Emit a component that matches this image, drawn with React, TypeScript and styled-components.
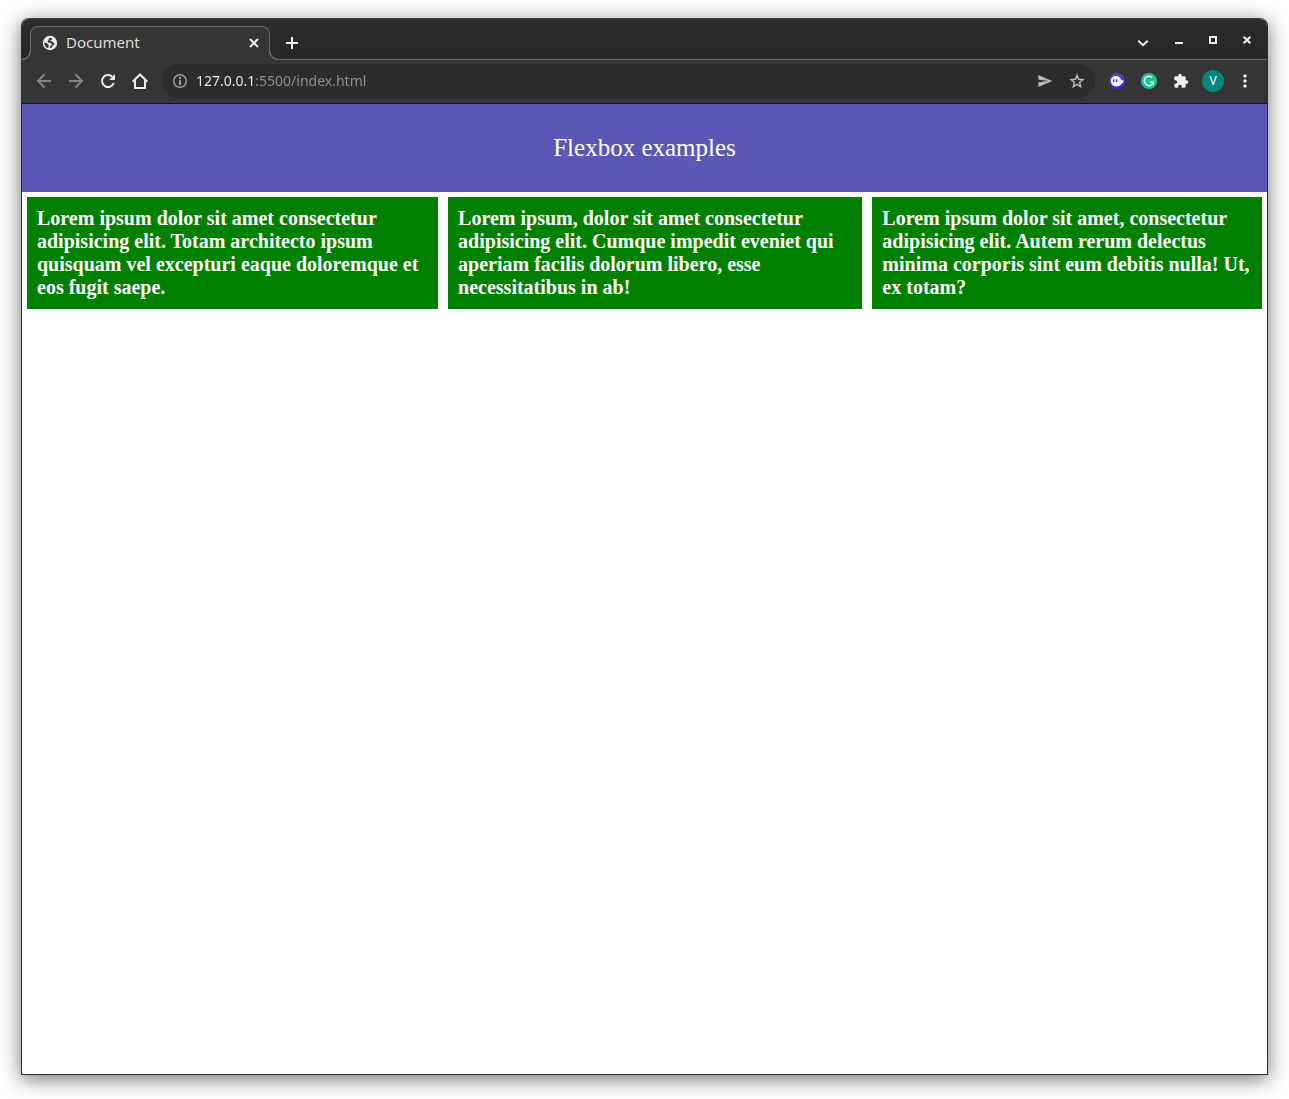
import React from "react";
import styled, { createGlobalStyle } from "styled-components";
import { MdExtension, MdMoreVert, MdSend } from "react-icons/md";

const color = {
  toolbar: "#353535",
  field: "#2c2c2c",
  line: "#6b6b6b",
  icon: "#eeeeec",
  muted: "#868686",
  soft: "#b9b9b9",
};

const uiFont = `"Noto Sans", "Open Sans", sans-serif`;

const GlobalStyle = createGlobalStyle`
  *, *::before, *::after { box-sizing: border-box; }
  body { margin: 0; background: #fff; }
`;

const Desktop = styled.div`
  display: flex;
  min-height: 100vh;
  padding: 18px 21px 24px;
`;

const BrowserWindow = styled.div`
  display: flex;
  flex-direction: column;
  flex: 1;
  min-width: 0;
  overflow: hidden;
  border: 1px solid #2e2e2e;
  border-top-color: #414141;
  border-radius: 8px 8px 0 0;
  background: #fff;
  box-shadow: 0 4px 20px rgba(0, 0, 0, 0.56);
`;

const TabStrip = styled.div`
  display: flex;
  align-items: flex-end;
  height: 41px;
  padding-left: 8px;
  background: linear-gradient(#2c2c2c, #262626);
  box-shadow: inset 0 -1px ${color.line};
  font-family: ${uiFont};
`;

const Tab = styled.div`
  position: relative;
  display: flex;
  align-items: center;
  width: 240px;
  height: 34px;
  padding: 0 7px 1px 11px;
  border: 1px solid ${color.line};
  border-bottom: 0;
  border-radius: 8px 8px 0 0;
  background: ${color.toolbar};
  color: #dededc;
  font-size: 15px;
  line-height: 22px;

  &::before,
  &::after {
    content: "";
    position: absolute;
    bottom: 0;
    width: 9px;
    height: 9px;
  }
  &::before {
    left: -9px;
    background: radial-gradient(circle at 0 0, #272727 7px, ${color.line} 8px, ${color.line} 9px, ${color.toolbar} 9px);
  }
  &::after {
    right: -9px;
    background: radial-gradient(circle at 100% 0, #272727 7px, ${color.line} 8px, ${color.line} 9px, ${color.toolbar} 9px);
  }
`;

const TabTitle = styled.span`
  flex: 1;
  margin-left: 8px;
  padding-bottom: 2px;
`;

const IconButton = styled.button<{ $width?: number; $tone?: string }>`
  display: flex;
  align-items: center;
  justify-content: center;
  flex: none;
  width: ${(p) => p.$width ?? 32}px;
  height: 32px;
  padding: 0;
  border: 0;
  background: none;
  color: ${(p) => p.$tone ?? color.icon};
`;

const NewTabSlot = styled.div`
  flex: 1;
  padding: 0 0 1px 6px;
`;

const WindowControls = styled.div`
  display: flex;
  align-self: flex-start;
  padding: 5px 3px 0 0;
`;

const Toolbar = styled.div`
  display: flex;
  align-items: center;
  height: 44px;
  padding: 0 6px 1px;
  border-bottom: 1px solid #151515;
  background: ${color.toolbar};
`;

const AddressBar = styled.div`
  display: flex;
  align-items: center;
  flex: 1;
  min-width: 0;
  height: 34px;
  margin: 0 6px;
  padding: 0 2px 0 10px;
  border-radius: 17px;
  background: ${color.field};
  color: #9aa0a6;
`;

/* The host part of the address is bright, the port and path are dimmed. */
const AddressInput = styled.input`
  flex: 1;
  min-width: 0;
  height: 20px;
  margin-left: 8px;
  padding: 0;
  border: 0;
  outline: 0;
  background: linear-gradient(90deg, #f2f2f0 60px, #929292 60px);
  background-clip: text;
  -webkit-background-clip: text;
  -webkit-text-fill-color: transparent;
  color: #f2f2f0;
  font-family: ${uiFont};
  font-size: 14px;
  line-height: 20px;
`;

const Avatar = styled.span`
  display: flex;
  align-items: center;
  justify-content: center;
  width: 22px;
  height: 22px;
  border-radius: 50%;
  background: #00897b;
  color: #fff;
  font-family: ${uiFont};
  font-size: 12px;
  line-height: 16px;
`;

const Page = styled.main`
  flex: 1;
  font-family: "Liberation Serif", "Times New Roman", serif;
  color: #fff;
`;

const Banner = styled.header`
  padding: 30px;
  background: #5a58b4;
  font-size: 25px;
  line-height: 28px;
  text-align: center;
`;

const Title = styled.h1`
  margin: 0;
  font: inherit;
`;

const Cards = styled.section`
  display: flex;
`;

const Card = styled.article`
  margin: 5px;
  padding: 10px;
  background: green;
  font-size: 20px;
  font-weight: bold;
  line-height: 23px;
`;

const LineIcon = styled.svg.attrs({ width: 16, height: 16, viewBox: "0 0 16 16" })`
  flex: none;
  fill: none;
  stroke: currentColor;
  stroke-width: 2;
`;

const GlobeIcon = () => (
  <svg width="16" height="16" viewBox="0 0 16 16">
    <circle cx="8" cy="8" r="7.2" fill={color.icon} />
    <path
      d="M8.800 2.700C6.500 3 6.300 4.200 7 5.200c-1.600.2-2 1.400-1 2.300 1.200.9 3.600 0 3.900 1.500.3 1.400-1.600 1.300-1.900 2.800l-.2 1.500c2-.4 2.500-1 2.700-2.300.2-1 1.500-.8 2.600-2.200-1.900-.1-1.300-2.100-3.100-2.400-1-.2-1.900.2-1.500-.8.3-.7 1.900-.5 1.900-1.500z"
      fill={color.toolbar}
    />
    <path d="M2.300 7.500c2 .5 3.900 1 4.300 2.500.3 1.300-.4 1.700-.2 3.300C3.700 12.600 2.100 10.600 2.300 7.500Z" fill={color.toolbar} />
  </svg>
);

const BackIcon = () => (
  <LineIcon>
    <path d="M15 8H2.500M8.500 1.500 2 8l6.500 6.500" />
  </LineIcon>
);

const ForwardIcon = () => (
  <LineIcon>
    <path d="M1 8h12.500M7.500 1.500 14 8l-6.500 6.500" />
  </LineIcon>
);

const ReloadIcon = () => (
  <LineIcon>
    <path d="M13.700 10A6 6 0 1 1 12.300 3.800" />
    <path d="M15 1v6H9z" fill="currentColor" stroke="none" />
  </LineIcon>
);

const HomeIcon = () => (
  <LineIcon>
    <path d="M.7 8.700 8 1.500l7.300 7.200M3 7v8h10V7" />
  </LineIcon>
);

const PlusIcon = () => (
  <LineIcon>
    <path d="M2 8h12M8 2v12" />
  </LineIcon>
);

const TabCloseIcon = () => (
  <LineIcon>
    <path d="m4 4 8 8M12 4l-8 8" />
  </LineIcon>
);

const ChevronIcon = () => (
  <LineIcon>
    <path d="m3.300 8.700 4.700 4.500 4.700-4.500" />
  </LineIcon>
);

const InfoIcon = () => (
  <LineIcon>
    <circle cx="8" cy="8" r="6.300" strokeWidth="1.500" />
    <path d="M8 7.200V12M8 4v2" />
  </LineIcon>
);

const StarIcon = () => (
  <LineIcon>
    <path
      d="m8 2.300 1.600 3.900 4.300.4-3.300 2.800 1 4.200L8 11.400l-3.600 2.200 1-4.200-3.300-2.800 4.300-.4z"
      strokeWidth="1.500"
    />
  </LineIcon>
);

const GhostIcon = () => (
  <svg width="16" height="16" viewBox="0 0 16 16">
    <defs>
      <linearGradient id="ghost" x1="0" y1="0" x2="0" y2="1">
        <stop offset="0" stopColor="#5348b0" />
        <stop offset="1" stopColor="#4a1fe0" />
      </linearGradient>
    </defs>
    <circle cx="8" cy="8" r="8" fill="url(#ghost)" />
    <path
      d="M1.800 7.800C1.800 4.800 4.200 3 7 3c2.700 0 4.300 1.500 5 3.500.4 1.100 1.400.7 2.400.4.600 1.800-.4 3.300-1.700 3.700-.8 2-2.900 2.800-5.400 2.800C4 13.400 1.800 11 1.800 7.800Z"
      fill="#f3effc"
    />
    <path d="M4.700 6.200v2.800M7.500 6.200v2.800" stroke="#4b2fc9" strokeWidth="1.300" />
  </svg>
);

const GrammarIcon = () => (
  <svg width="16" height="16" viewBox="0 0 16 16">
    <circle cx="8" cy="8" r="8" fill="#15c39a" />
    <path
      d="M11.300 4.700A4.600 4.600 0 1 0 12.400 9H9.100M12.400 8.500v3.300"
      fill="none"
      stroke="#e9fff9"
      strokeWidth="1.400"
    />
  </svg>
);

const MinimizeIcon = () => (
  <svg width="8" height="8" viewBox="0 0 8 8">
    <path d="M0 6h8v2H0z" fill="currentColor" />
  </svg>
);

const MaximizeIcon = () => (
  <svg width="8" height="8" viewBox="0 0 8 8">
    <path d="M1 1h6v6H1z" fill="none" stroke="currentColor" strokeWidth="2" />
  </svg>
);

const CloseIcon = () => (
  <svg width="8" height="8" viewBox="0 0 8 8">
    <path d="m.7.7 6.600 6.600M7.300.7.700 7.300" stroke="currentColor" strokeWidth="2" />
  </svg>
);

const paragraphs = [
  "Lorem ipsum dolor sit amet consectetur adipisicing elit. Totam architecto ipsum quisquam vel excepturi eaque doloremque et eos fugit saepe.",
  "Lorem ipsum, dolor sit amet consectetur adipisicing elit. Cumque impedit eveniet qui aperiam facilis dolorum libero, esse necessitatibus in ab!",
  "Lorem ipsum dolor sit amet, consectetur adipisicing elit. Autem rerum delectus minima corporis sint eum debitis nulla! Ut, ex totam?",
];

export default function App() {
  return (
    <>
      <GlobalStyle />
      <Desktop>
        <BrowserWindow>
          <TabStrip>
            <Tab>
              <GlobeIcon />
              <TabTitle>Document</TabTitle>
              <IconButton $width={16} aria-label="Close tab">
                <TabCloseIcon />
              </IconButton>
            </Tab>
            <NewTabSlot>
              <IconButton aria-label="New tab">
                <PlusIcon />
              </IconButton>
            </NewTabSlot>
            <WindowControls>
              <IconButton $width={38} aria-label="Search tabs">
                <ChevronIcon />
              </IconButton>
              <IconButton $width={34} aria-label="Minimize">
                <MinimizeIcon />
              </IconButton>
              <IconButton $width={34} aria-label="Maximize">
                <MaximizeIcon />
              </IconButton>
              <IconButton $width={34} aria-label="Close window">
                <CloseIcon />
              </IconButton>
            </WindowControls>
          </TabStrip>
          <Toolbar>
            <IconButton $tone={color.muted} aria-label="Back">
              <BackIcon />
            </IconButton>
            <IconButton $tone={color.muted} aria-label="Forward">
              <ForwardIcon />
            </IconButton>
            <IconButton aria-label="Reload">
              <ReloadIcon />
            </IconButton>
            <IconButton aria-label="Home">
              <HomeIcon />
            </IconButton>
            <AddressBar>
              <InfoIcon />
              <AddressInput aria-label="Address" defaultValue="127.0.0.1:5500/index.html" />
              <IconButton $tone={color.soft} aria-label="Share">
                <MdSend size={16} />
              </IconButton>
              <IconButton $tone={color.soft} aria-label="Bookmark">
                <StarIcon />
              </IconButton>
            </AddressBar>
            <IconButton aria-label="Ghost extension">
              <GhostIcon />
            </IconButton>
            <IconButton aria-label="Grammar extension">
              <GrammarIcon />
            </IconButton>
            <IconButton aria-label="Extensions">
              <MdExtension size={16} />
            </IconButton>
            <IconButton aria-label="Profile">
              <Avatar>V</Avatar>
            </IconButton>
            <IconButton aria-label="Menu">
              <MdMoreVert size={20} />
            </IconButton>
          </Toolbar>
          <Page>
            <Banner>
              <Title>Flexbox examples</Title>
            </Banner>
            <Cards>
              {paragraphs.map((text) => (
                <Card key={text}>{text}</Card>
              ))}
            </Cards>
          </Page>
        </BrowserWindow>
      </Desktop>
    </>
  );
}
